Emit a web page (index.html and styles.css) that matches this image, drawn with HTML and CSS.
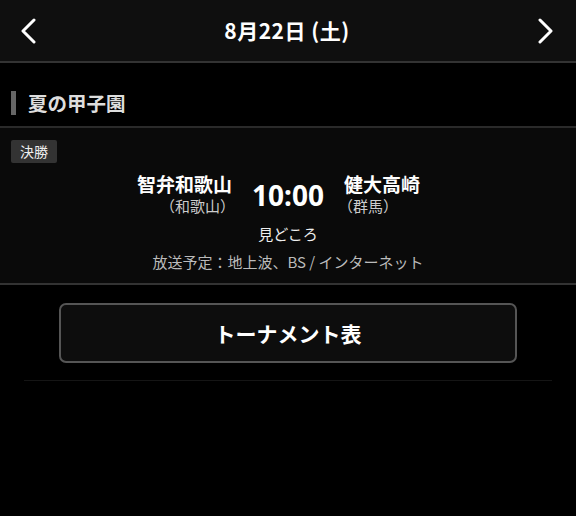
FILE: index.html
```html
<!DOCTYPE html>
<html lang="ja">
<head>
<meta charset="utf-8">
<link rel="stylesheet" href="styles.css">
</head>
<body>
<header class="topbar">
  <button class="nav prev" aria-label="前の日">
    <svg width="18" height="26" viewBox="0 0 18 26"><path d="M15 2 L4 13 L15 24" fill="none" stroke="#fff" stroke-width="3" stroke-linecap="round" stroke-linejoin="round"/></svg>
  </button>
  <h1 class="date">8月22日 (土)</h1>
  <button class="nav next" aria-label="次の日">
    <svg width="18" height="26" viewBox="0 0 18 26"><path d="M3 2 L14 13 L3 24" fill="none" stroke="#fff" stroke-width="3" stroke-linecap="round" stroke-linejoin="round"/></svg>
  </button>
</header>
<section class="tournament">
  <h2 class="section-title">夏の甲子園</h2>
  <div class="match">
    <span class="badge">決勝</span>
    <div class="teams">
      <div class="team left">
        <div class="name">智弁和歌山</div>
        <div class="pref">（和歌山）</div>
      </div>
      <div class="time">10:00</div>
      <div class="team right">
        <div class="name">健大高崎</div>
        <div class="pref">（群馬）</div>
      </div>
    </div>
    <div class="highlight">見どころ</div>
    <div class="broadcast">放送予定：地上波、BS / インターネット</div>
  </div>
</section>
<div class="actions">
  <button class="bracket">トーナメント表</button>
</div>
<div class="divider"></div>
</body>
</html>
```
FILE: styles.css
```css
* { box-sizing: border-box; }
html, body { margin: 0; padding: 0; }
body {
  background: #000;
  color: #fff;
  font-family: "Noto Sans CJK JP", "Noto Sans", sans-serif;
  width: 576px;
  height: 516px;
  overflow: hidden;
}
.topbar {
  height: 63px;
  background: #0f0f0f;
  border-bottom: 2px solid #333;
  display: flex;
  align-items: center;
  justify-content: space-between;
  padding: 0 20px 0 18px;
}
.nav {
  background: none;
  border: 0;
  padding: 0;
  width: 20px;
  height: 28px;
  display: flex;
  align-items: center;
  justify-content: center;
}
.date {
  margin: 0;
  font-size: 21px;
  font-weight: 700;
  line-height: 1;
  letter-spacing: 0.5px;
}
.tournament { padding-top: 28px; }
.section-title {
  margin: 0 0 0 11px;
  padding-left: 12px;
  border-left: 5px solid #666;
  font-size: 19.5px;
  font-weight: 700;
  color: #ddd;
  height: 24px;
  line-height: 24px;
}
.match {
  margin-top: 11px;
  border-top: 2px solid #2a2a2a;
  border-bottom: 2px solid #333;
  background: #0a0a0a;
  padding: 12px 0 11px;
  display: flex;
  flex-direction: column;
  align-items: center;
}
.badge {
  align-self: flex-start;
  margin-left: 11px;
  background: #333;
  color: #eee;
  font-size: 14px;
  line-height: 23px;
  height: 23px;
  padding: 0 9px;
  border-radius: 2px;
}
.teams {
  display: grid;
  grid-template-columns: 1fr auto 1fr;
  align-items: center;
  column-gap: 20px;
  margin-top: 9px;
}
.team { display: flex; flex-direction: column; }
.team.left { align-items: flex-end; }
.team.right { align-items: flex-start; }
.name {
  font-size: 19px;
  font-weight: 700;
  line-height: 24px;
}
.pref {
  font-size: 15px;
  color: #ccc;
  line-height: 20px;
}
.team.left .pref { margin-right: -3px; }
.team.right .pref { margin-left: -6px; }
.time {
  font-family: "Noto Sans", "Roboto", sans-serif;
  font-size: 28px;
  font-weight: 700;
  line-height: 1;
  margin-top: 2px;
}
.highlight {
  margin-top: 8px;
  font-size: 15px;
  line-height: 20px;
  color: #eee;
}
.broadcast {
  margin-top: 8px;
  font-size: 15px;
  line-height: 20px;
  color: #bbb;
}
.actions {
  padding: 18px 59px 0 59px;
}
.bracket {
  width: 100%;
  height: 60px;
  background: #0d0d0d;
  border: 2px solid #555;
  border-radius: 7px;
  color: #fff;
  font-family: "Noto Sans CJK JP", "Noto Sans", sans-serif;
  font-size: 21px;
  font-weight: 700;
}
.divider {
  margin: 17px 24px 0;
  height: 1px;
  background: #151515;
}
```
